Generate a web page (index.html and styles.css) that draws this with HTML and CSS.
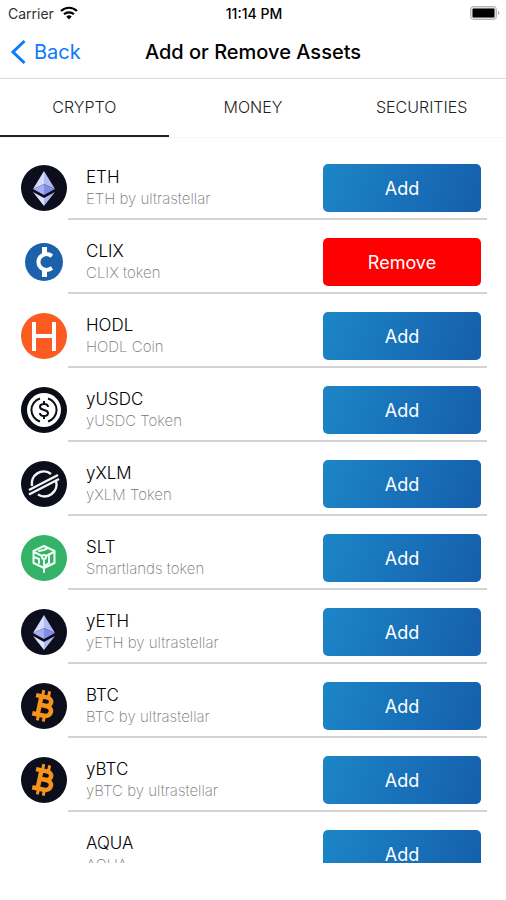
FILE: index.html
```html
<!DOCTYPE html>
<html lang="en">
<head>
<meta charset="utf-8">
<meta name="viewport" content="width=device-width, initial-scale=1">
<title>Add or Remove Assets</title>
<link rel="stylesheet" href="styles.css">
</head>
<body>
<svg class="sprite" aria-hidden="true">
  <symbol id="eth" viewBox="0 0 46 46">
    <circle cx="23" cy="23" r="23" fill="#0c0e1b"/>
    <path d="M23 6 12 24 23 19z" fill="#d8dcfb"/>
    <path d="M23 6 34 24 23 19z" fill="#b3bbf2"/>
    <path d="M12 24 23 19v11z" fill="#a5b0f3"/>
    <path d="M34 24 23 19v11z" fill="#7f8de6"/>
    <path d="M12 27 23 33v8z" fill="#dfe2fc"/>
    <path d="M34 27 23 33v8z" fill="#b0b9f3"/>
  </symbol>
  <symbol id="clix" viewBox="0 0 46 46">
    <circle cx="23" cy="23" r="19" fill="#1b62ab"/>
    <path d="M31 17c-3-2-6-3-9-1-6 3-6 11 0 14 3 2 6 1 9-1" fill="none" stroke="#fff" stroke-width="4"/>
    <path d="M21 8h5v7l-5 2zM21 30l5 1v7h-5z" fill="#fff"/>
  </symbol>
  <symbol id="hodl" viewBox="0 0 46 46">
    <circle cx="23" cy="23" r="23" fill="#fb5b21"/>
    <path d="M13 9v29M33 9v29M13 23h20" fill="none" stroke="#fff" stroke-width="4"/>
  </symbol>
  <symbol id="usdc" viewBox="0 0 46 46">
    <circle cx="23" cy="23" r="23" fill="#0b0d16"/>
    <circle cx="23" cy="23" r="17" fill="#fff"/>
    <g fill="none" stroke="#0b0d16" stroke-width="2">
      <path d="M19 11.500a12 12 0 0 0 0 23M27 11.500a12 12 0 0 1 0 23"/>
      <path d="M27 20c0-2-2-3-4-3s-4 1-4 3c0 4 8 2 8 6 0 2-2 3-4 3s-4-1-4-3M23 14v3M23 29v3"/>
    </g>
  </symbol>
  <symbol id="xlm" viewBox="0 0 46 46">
    <circle cx="23" cy="23" r="23" fill="#0c0e1b"/>
    <g fill="none" stroke="#f4f4f4" stroke-width="2.500">
      <path d="M11 25a12 12 0 0 1 19-12M35 20a12 12 0 0 1-18 13.500"/>
      <path d="M8 29 37 14M8 33.500 38 18"/>
    </g>
  </symbol>
  <symbol id="slt" viewBox="0 0 46 46">
    <circle cx="23" cy="23" r="23" fill="#34b268"/>
    <g fill="none" stroke="#effff4" stroke-width="2" stroke-linejoin="round" stroke-linecap="round">
      <path d="m23 11 10.500 5v12L23 33l-10.500-5V16zM23 24v13M21 21l-8-4M25 21l8-4M18 16l5-1 4-2M18 24v4M18 24l-5-2M28 21v7l-5 3"/>
      <circle cx="23" cy="22" r="2"/>
    </g>
  </symbol>
  <symbol id="btc" viewBox="0 0 46 46">
    <circle cx="23" cy="23" r="23" fill="#0c0e1b"/>
    <g transform="rotate(12 23 23)" fill="none" stroke="#f7931a">
      <path d="M18.500 13v20M13 14h11c7 0 7 8.500 0 8.500h-5M13 32.500h12c8 0 8-10 0-10" stroke-width="4.500"/>
      <path d="M19.500 7.500v6M25.500 7.500v6M19.500 33v5.500M25.500 33v5.500" stroke-width="3"/>
    </g>
  </symbol>
</svg>
<div class="app">
  <header>
    <div class="status">
      <span class="carrier">Carrier
        <svg class="wifi" viewBox="0 0 18 14" aria-hidden="true">
          <path d="M1 5a11.500 11.500 0 0 1 16 0M4 8.200a7.500 7.500 0 0 1 10 0" fill="none" stroke="#000" stroke-width="2.200"/>
          <path d="M6.300 10.600a4 4 0 0 1 5.400 0L9 13.400z"/>
        </svg>
      </span>
      <time class="clock">11:14 PM</time>
      <svg class="battery" viewBox="0 0 30 14" aria-hidden="true">
        <rect x=".5" y=".5" width="26" height="13" rx="3" fill="#ddd" stroke="#b5b5b5"/>
        <rect x="2.500" y="2.500" width="22" height="9" rx="1"/>
        <path d="M28 5c2 1 2 3 0 4z" fill="#a5a5a5"/>
      </svg>
    </div>
    <nav class="navbar">
      <a class="back" href="#">
        <svg class="chevron" viewBox="0 0 16 26" aria-hidden="true"><path d="M14.500 2 3 13l11.500 11" fill="none" stroke="#0a7aff" stroke-width="3"/></svg>
        Back
      </a>
      <h1>Add or Remove Assets</h1>
    </nav>
  </header>
  <div class="tabs" role="tablist">
    <button class="tab active" role="tab" aria-selected="true">CRYPTO</button>
    <button class="tab" role="tab" aria-selected="false">MONEY</button>
    <button class="tab" role="tab" aria-selected="false">SECURITIES</button>
  </div>
  <main>
    <ul class="assets">
      <li><svg class="coin"><use href="#eth"/></svg><div class="row"><div><h2>ETH</h2><p>ETH by ultrastellar</p></div><button class="action">Add</button></div></li>
      <li><svg class="coin"><use href="#clix"/></svg><div class="row"><div><h2>CLIX</h2><p>CLIX token</p></div><button class="action remove">Remove</button></div></li>
      <li><svg class="coin"><use href="#hodl"/></svg><div class="row"><div><h2>HODL</h2><p>HODL Coin</p></div><button class="action">Add</button></div></li>
      <li><svg class="coin"><use href="#usdc"/></svg><div class="row"><div><h2>yUSDC</h2><p>yUSDC Token</p></div><button class="action">Add</button></div></li>
      <li><svg class="coin"><use href="#xlm"/></svg><div class="row"><div><h2>yXLM</h2><p>yXLM Token</p></div><button class="action">Add</button></div></li>
      <li><svg class="coin"><use href="#slt"/></svg><div class="row"><div><h2>SLT</h2><p>Smartlands token</p></div><button class="action">Add</button></div></li>
      <li><svg class="coin"><use href="#eth"/></svg><div class="row"><div><h2>yETH</h2><p>yETH by ultrastellar</p></div><button class="action">Add</button></div></li>
      <li><svg class="coin"><use href="#btc"/></svg><div class="row"><div><h2>BTC</h2><p>BTC by ultrastellar</p></div><button class="action">Add</button></div></li>
      <li><svg class="coin"><use href="#btc"/></svg><div class="row"><div><h2>yBTC</h2><p>yBTC by ultrastellar</p></div><button class="action">Add</button></div></li>
      <li><span class="coin"></span><div class="row"><div><h2>AQUA</h2><p>AQUA</p></div><button class="action">Add</button></div></li>
    </ul>
  </main>
</div>
</body>
</html>
```
FILE: styles.css
```css
* { box-sizing: border-box; }
body { margin: 0; background: #fff; color: #000; font-family: Inter, "Liberation Sans", sans-serif; }
h1, h2, p, ul { margin: 0; padding: 0; font-weight: 400; }
button { border: 0; margin: 0; font: inherit; }
.sprite { position: absolute; width: 0; height: 0; }
.app { display: flex; flex-direction: column; height: 100vh; padding-bottom: 37px; }
header { border-bottom: 1px solid #dcdcdc; }
.status { display: grid; grid-template-columns: 1fr auto 1fr; align-items: center; height: 26px; padding: 0 6px 0 8px; font-size: 14px; }
.carrier { display: flex; align-items: center; gap: 6px; color: #333; }
.wifi { width: 18px; height: 14px; }
.clock { font-weight: 500; }
.battery { width: 30px; height: 14px; justify-self: end; }
.navbar { display: grid; grid-template-columns: 1fr auto 1fr; align-items: center; height: 52px; padding: 0 10px; }
.back { display: flex; align-items: center; gap: 8px; color: #0a7aff; font-size: 20px; text-decoration: none; }
.chevron { width: 16px; height: 26px; }
h1 { font-size: 20px; font-weight: 500; }
.tabs { display: grid; grid-template-columns: repeat(3, 1fr); border-bottom: 1px solid #f6f6f6; }
.tab { height: 58px; background: none; border-bottom: 2px solid transparent; color: #222; font-size: 16px; font-weight: 300; }
.tab.active { border-color: #222; }
main { flex: 1; min-height: 0; overflow: hidden; padding-top: 8px; }
.assets { list-style: none; }
.assets li { display: flex; padding: 0 19px 0 21px; }
.coin { flex: none; width: 46px; height: 46px; margin: 19px 1px 0 0; }
.row { flex: 1; display: flex; align-items: center; justify-content: space-between; padding: 18px 6px 6px 18px; border-bottom: 2px solid #d3d3d3; }
h2 { font-size: 17px; font-weight: 300; line-height: 22px; }
p { color: #777; font-size: 15px; font-weight: 200; line-height: 22px; }
.action { width: 158px; height: 48px; border-radius: 5px; background: linear-gradient(110deg, #1c86c7, #155eac); color: #fff; font-size: 18px; }
.action.remove { background: #f00; }
```
